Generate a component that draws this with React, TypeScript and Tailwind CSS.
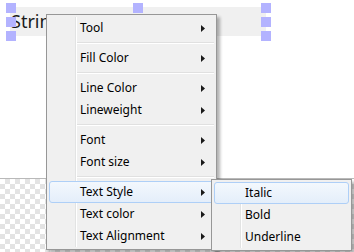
import React from 'react';

type Item = { label: string; sub?: boolean; active?: boolean } | 'sep';

const mainItems: Item[] = [
  { label: 'Tool', sub: true },
  'sep',
  { label: 'Fill Color', sub: true },
  'sep',
  { label: 'Line Color', sub: true },
  { label: 'Lineweight', sub: true },
  'sep',
  { label: 'Font', sub: true },
  { label: 'Font size', sub: true },
  'sep',
  { label: 'Text Style', sub: true, active: true },
  { label: 'Text color', sub: true },
  { label: 'Text Alignment', sub: true },
];

const styleItems: Item[] = [
  { label: 'Italic', active: true },
  { label: 'Bold' },
  { label: 'Underline' },
];

const Arrow = () => (
  <svg width="4" height="7" viewBox="0 0 4 7" className="absolute right-[8px] top-[7px]">
    <polygon points="0,0 4,3.5 0,7" fill="#1a1a1a" />
  </svg>
);

const Menu = ({ items, className }: { items: Item[]; className: string }) => (
  <div
    className={`absolute border border-[#979797] bg-[#f0f0f0] p-[2px] shadow-[3px_3px_3px_rgba(0,0,0,0.3)] ${className}`}
  >
    <div className="absolute bottom-[2px] left-[28px] top-[2px] w-[2px] border-l border-[#e2e3e3] bg-white" />
    <div className="relative flex flex-col">
      {items.map((it, i) =>
        it === 'sep' ? (
          <div key={i} className="ml-[28px] flex h-[8px] flex-col justify-center">
            <div className="h-px bg-[#e0e0e0]" />
            <div className="h-px bg-white" />
          </div>
        ) : (
          <div
            key={i}
            className={`relative flex h-[22px] items-center pl-[30px] text-[12px] text-black ${
              it.active
                ? 'rounded-[3px] border border-[#aecff7] bg-gradient-to-b from-[#f3f8fd] to-[#e4eefa]'
                : 'border border-transparent'
            }`}
          >
            {it.label}
            {it.sub && <Arrow />}
          </div>
        )
      )}
    </div>
  </div>
);

const Handle = ({ className }: { className: string }) => (
  <div className={`absolute h-[10px] w-[10px] bg-[#b3b3ff] ${className}`} />
);

export default function App() {
  return (
    <div className="relative h-[252px] w-[354px] overflow-hidden bg-white font-['Noto_Sans','Liberation_Sans',sans-serif]">
      <div className="flex h-full flex-col">
        <div className="h-[178px] bg-white" />
        <div className="flex-1 border-t border-[#b9b9b9] bg-[conic-gradient(#e3e3e3_25%,#ffffff_0_50%,#e3e3e3_0_75%,#ffffff_0)] bg-[length:10px_10px]" />
      </div>

      <div className="absolute left-[10px] top-[7px] h-[29px] w-[256px] overflow-hidden bg-[#f0f0f0] pl-[1px] text-[18px] leading-[29px] text-[#1a1a1a]">
        String
      </div>
      <Handle className="left-[6px] top-[3px]" />
      <Handle className="left-[6px] top-[17px]" />
      <Handle className="left-[6px] top-[31px]" />
      <Handle className="left-[133px] top-[3px]" />
      <Handle className="left-[261px] top-[3px]" />
      <Handle className="left-[261px] top-[17px]" />
      <Handle className="left-[261px] top-[31px]" />

      <Menu items={mainItems} className="left-[46px] top-[14px] w-[171px]" />
      <Menu items={styleItems} className="left-[211px] top-[179px] w-[141px]" />
    </div>
  );
}
